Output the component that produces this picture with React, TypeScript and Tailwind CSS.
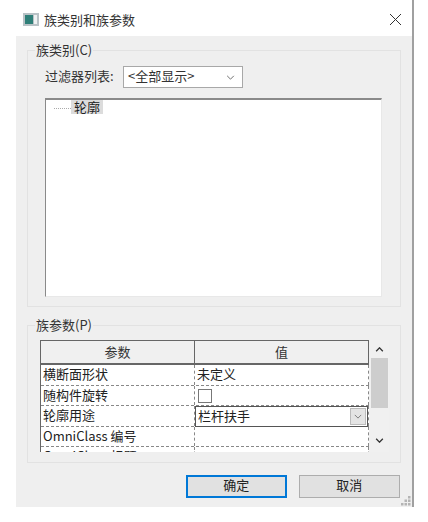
const font = { fontFamily: '"Noto Sans CJK SC", "Liberation Sans", sans-serif' };

function Chevron({ className, bold }: { className?: string; bold?: boolean }) {
  return (
    <svg viewBox="0 0 10 6" className={className} fill="none" stroke="currentColor" strokeWidth={bold ? 1.6 : 1}>
      <path d="M1 1l4 4 4-4" />
    </svg>
  );
}

function Row({ name, children, last }: { name: string; children?: React.ReactNode; last?: boolean }) {
  return (
    <div className={`flex h-[20.5px] border-dashed border-[#888] ${last ? '' : 'border-b'}`}>
      <div className="w-[154px] shrink-0 border-r border-dashed border-[#888] pl-[2px] text-[13px] leading-[17px] text-[#222] overflow-hidden whitespace-nowrap">{name}</div>
      <div className="flex-1 min-w-0 border-r border-dashed border-[#888] text-[13px] leading-[17px] text-[#222]">{children}</div>
    </div>
  );
}

export default function App() {
  return (
    <div className="w-[428px] h-[522px] bg-white overflow-hidden" style={font}>
      <div className="relative ml-[16px] w-[398px] h-[507px] border-r-2 border-[#a0a0a0] flex flex-col">
        {/* Title bar */}
        <div className="h-[36px] shrink-0 flex items-center bg-white pt-[3px] pl-[7px] pr-[11px]">
          <svg viewBox="0 0 16 13" className="w-[16px] h-[13px] shrink-0">
            <rect x="0" y="0" width="16" height="13" fill="#b9c2c6" />
            <rect x="2" y="2" width="8" height="9" fill="#2f7f78" />
            <rect x="11" y="2" width="3" height="9" fill="#eef1f2" />
          </svg>
          <span className="ml-[5px] text-[13px] text-[#333]">族类别和族参数</span>
          <svg viewBox="0 0 11 11" className="w-[11px] h-[11px] ml-auto" fill="none" stroke="#333" strokeWidth="1">
            <path d="M0 0l11 11M11 0L0 11" />
          </svg>
        </div>

        {/* Body */}
        <div className="flex-1 bg-[#efefef] pt-[14px] pl-[11px] pr-[12px] flex flex-col">
          {/* Family category group */}
          <div className="relative w-[374px] h-[257px] border border-[#e2e2e2] pt-[15px] pl-[17px]">
            <span className="absolute left-[7px] top-[-10px] bg-[#efefef] px-[1px] text-[13px] leading-[18px] text-[#333]">族类别(C)</span>
            <div className="flex items-center h-[22px]">
              <span className="text-[13px] leading-[18px] pb-[3px] text-[#333] w-[78px] shrink-0">过滤器列表:</span>
              <div className="w-[120px] h-[22px] bg-white border border-[#a8a8a8] flex items-center pl-[4px] pr-[7px] text-[13px] text-[#333]">
                <span className="leading-[18px] pb-[3px]">&lt;全部显示&gt;</span>
                <Chevron className="w-[9px] h-[5px] ml-auto text-[#555]" />
              </div>
            </div>
            <div className="mt-[10px] w-[337px] h-[199px] bg-white border-t-2 border-l border-[#8a8a8a] border-r border-r-[#e8e8e8] border-b border-b-[#e8e8e8] flex items-start pl-[8px]">
              <div className="w-[17px] mt-[8px] border-t border-dotted border-[#aaa]" />
              <span className="bg-[#dcdcdc] px-[3px] text-[13px] leading-[14px] text-[#222]">轮廓</span>
            </div>
          </div>

          {/* Family parameters group */}
          <div className="relative mt-[18px] w-[374px] h-[138px] border border-[#e2e2e2] pt-[14px] pl-[12px]">
            <span className="absolute left-[7px] top-[-10px] bg-[#efefef] px-[1px] text-[13px] leading-[18px] text-[#333]">族参数(P)</span>
            <div className="flex w-[349px] h-[112px] bg-white overflow-hidden">
              <div className="w-[329px] shrink-0 border-l border-t border-[#666]">
                <div className="flex h-[24px] border-b-2 border-[#666] bg-[#f0f0f0] text-[13px] text-[#333]">
                  <div className="w-[154px] shrink-0 border-r border-[#666] flex items-center justify-center">参数</div>
                  <div className="flex-1 border-r border-[#666] flex items-center justify-center">值</div>
                </div>
                <Row name="横断面形状"><span className="pl-[2px]">未定义</span></Row>
                <Row name="随构件旋转">
                  <div className="ml-[3px] mt-[3px] w-[14px] h-[14px] bg-white border border-[#777]" />
                </Row>
                <Row name="轮廓用途">
                  <div className="h-[21px] border border-[#444] outline outline-1 outline-[#555] -outline-offset-1 flex items-center pl-[2px] pr-[1px]">
                    <span className="pb-[3px]">栏杆扶手</span>
                    <div className="ml-auto w-[16px] h-[17px] bg-[#e4e4e4] border border-[#bbb] flex items-center justify-center">
                      <Chevron className="w-[8px] h-[5px] text-[#666]" />
                    </div>
                  </div>
                </Row>
                <Row name="OmniClass 编号" />
                <Row name="OmniClass 标题" last />
              </div>
              <div className="flex-1 bg-[#f0f0f0] flex flex-col items-center">
                <div className="h-[18px] flex items-center justify-center text-[#333]">
                  <Chevron bold className="w-[9px] h-[5px] rotate-180" />
                </div>
                <div className="w-[17px] h-[50px] bg-[#cdcdcd]" />
                <div className="flex-1" />
                <div className="h-[24px] flex items-center justify-center text-[#333]">
                  <Chevron bold className="w-[9px] h-[5px]" />
                </div>
              </div>
            </div>
          </div>

          {/* Buttons */}
          <div className="relative mt-[12px] flex pl-[159px] gap-[12px]">
            <button className="w-[101px] h-[23px] pb-[3px] bg-[#e1e1e1] border-2 border-[#0078d7] text-[13px] leading-[16px] text-[#222] flex items-center justify-center">确定</button>
            <button className="w-[102px] h-[23px] pb-[3px] bg-[#e1e1e1] border border-[#adadad] text-[13px] leading-[16px] text-[#222] flex items-center justify-center">取消</button>
          </div>
        </div>

        {/* Resize grip */}
        <svg viewBox="0 0 10 10" className="absolute right-[1px] bottom-[1px] w-[10px] h-[10px]" fill="#b4b4b4">
          <rect x="7" y="0" width="2.5" height="2.5" />
          <rect x="3.5" y="3.5" width="2.5" height="2.5" />
          <rect x="7" y="3.5" width="2.5" height="2.5" />
          <rect x="0" y="7" width="2.5" height="2.5" />
          <rect x="3.5" y="7" width="2.5" height="2.5" />
          <rect x="7" y="7" width="2.5" height="2.5" />
        </svg>
      </div>
    </div>
  );
}
